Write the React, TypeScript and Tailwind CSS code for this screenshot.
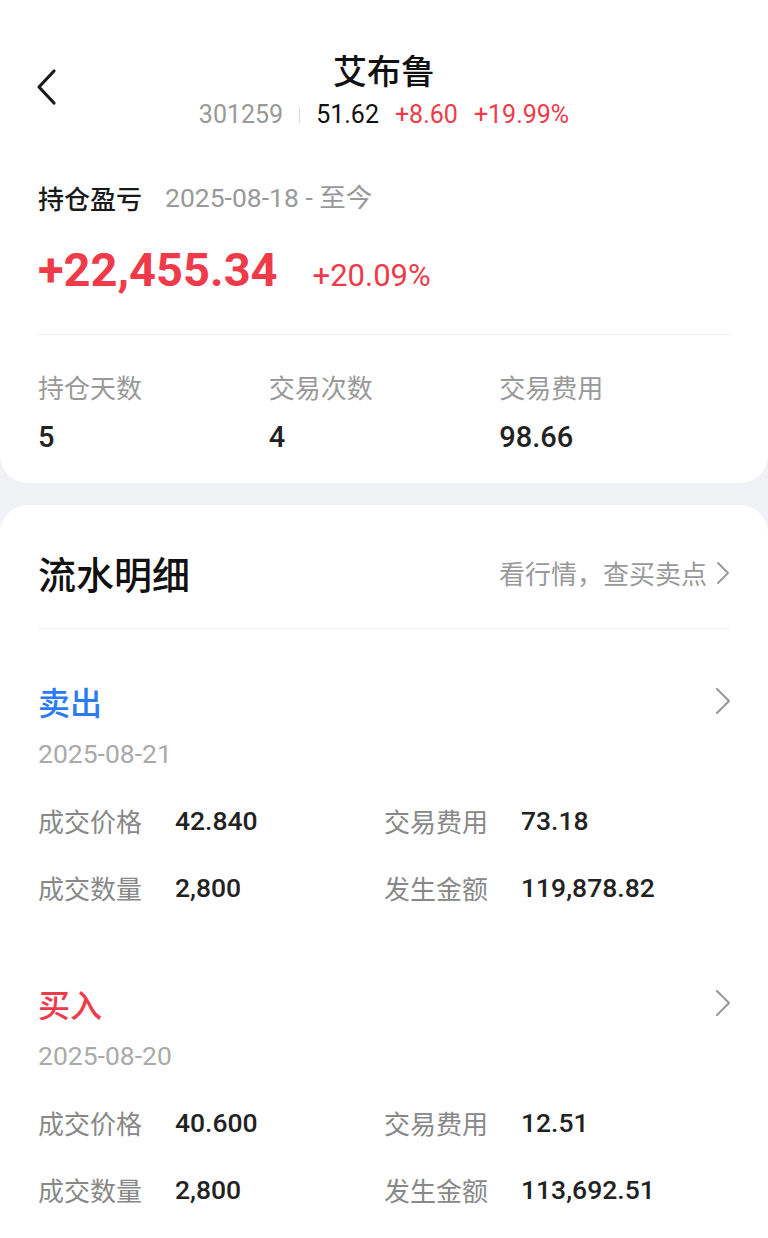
import React from "react";

const RED = "text-[#ef3a4a]";
const numFont = { fontFamily: "Roboto, 'Noto Sans CJK SC', sans-serif" };

const cjk = "font-['Noto_Sans_CJK_SC',sans-serif]";

const Chevron = ({ className = "" }: { className?: string }) => (
  <svg width="16" height="28" viewBox="0 0 16 28" className={className}>
    <path d="M2 2 L14 14 L2 26" fill="none" stroke="#9a9a9a" strokeWidth="2.2" strokeLinecap="round" strokeLinejoin="round" />
  </svg>
);

type Trade = {
  side: string;
  color: string;
  date: string;
  price: string;
  fee: string;
  qty: string;
  amount: string;
};

const trades: Trade[] = [
  { side: "卖出", color: "text-[#2b7cf3]", date: "2025-08-21", price: "42.840", fee: "73.18", qty: "2,800", amount: "119,878.82" },
  { side: "买入", color: "text-[#ef3a4a]", date: "2025-08-20", price: "40.600", fee: "12.51", qty: "2,800", amount: "113,692.51" },
];

const Field = ({ label, value }: { label: string; value: string }) => (
  <div className="flex items-center">
    <span className="w-[137px] text-[26px] leading-[30px] text-[#888]">{label}</span>
    <span className="text-[26.5px] leading-[30px] text-[#222] font-medium" style={numFont}>{value}</span>
  </div>
);

export default function App() {
  return (
    <div className={`min-h-[1238px] bg-[#f1f2f6] ${cjk}`}>
      {/* top card */}
      <div className="bg-white rounded-b-[28px] px-[38px] pt-[50px] pb-[30px]">
        <div className="relative">
          <svg width="24" height="40" viewBox="0 0 24 40" className="absolute left-[-2px] top-[18px]">
            <path d="M18 3 L3 19 L18 35" fill="none" stroke="#1a1a1a" strokeWidth="3.2" strokeLinecap="round" strokeLinejoin="round" />
          </svg>
          <div className="text-center text-[34px] leading-[40px] font-medium text-[#111]">艾布鲁</div>
          <div className="mt-[10px] flex items-center justify-center text-[25px] leading-[30px]" style={numFont}>
            <span className="text-[#999]">301259</span>
            <span className="mx-[16px] h-[16px] w-px bg-[#d8d8d8]" />
            <span className="text-[#111]">51.62</span>
            <span className={`ml-[16px] ${RED}`}>+8.60</span>
            <span className={`ml-[16px] ${RED}`}>+19.99%</span>
          </div>
        </div>

        <div className="mt-[53px] flex items-center leading-[30px]">
          <span className="text-[26px] font-medium text-[#1a1a1a]">持仓盈亏</span>
          <span className="ml-[23px] text-[26.5px] text-[#999]" style={numFont}>2025-08-18 - 至今</span>
        </div>

        <div className="mt-[31px] flex items-baseline">
          <span className={`text-[47px] leading-[52px] font-bold ${RED}`} style={numFont}>+22,455.34</span>
          <span className={`ml-[35px] text-[31px] leading-[34px] ${RED}`} style={numFont}>+20.09%</span>
        </div>

        <div className="mt-[38px] h-px bg-[#f0f0f0]" />

        <div className="mt-[37px] grid grid-cols-3">
          {[
            ["持仓天数", "5"],
            ["交易次数", "4"],
            ["交易费用", "98.66"],
          ].map(([l, v]) => (
            <div key={l}>
              <div className="text-[26px] leading-[30px] text-[#999]">{l}</div>
              <div className="mt-[19px] text-[29px] leading-[32px] font-medium text-[#222]" style={numFont}>{v}</div>
            </div>
          ))}
        </div>
      </div>

      {/* detail card */}
      <div className="mt-[22px] bg-white rounded-t-[28px] px-[38px] pt-[46px] pb-[34px] min-h-[733px]">
        <div className="flex items-center justify-between">
          <span className="text-[38px] leading-[44px] font-medium text-[#111]">流水明细</span>
          <span className="flex items-center text-[26px] leading-[30px] text-[#999]">
            看行情，查买卖点
            <svg width="14" height="24" viewBox="0 0 14 24" className="ml-[9px]">
              <path d="M2 2 L12 12 L2 22" fill="none" stroke="#9a9a9a" strokeWidth="2" strokeLinecap="round" strokeLinejoin="round" />
            </svg>
          </span>
        </div>
        <div className="mt-[33px] h-px bg-[#f0f0f0]" />

        {trades.map((t, i) => (
          <div key={t.date} className={i === 0 ? "mt-[52px]" : "mt-[80px]"}>
            <div className="flex items-center justify-between">
              <span className={`text-[32px] leading-[40px] font-medium ${t.color}`}>{t.side}</span>
              <Chevron className="mr-[-1px]" />
            </div>
            <div className="mt-[18px] text-[26.5px] leading-[30px] text-[#aaa]" style={numFont}>{t.date}</div>
            <div className="mt-[37px] grid grid-cols-2">
              <Field label="成交价格" value={t.price} />
              <Field label="交易费用" value={t.fee} />
            </div>
            <div className="mt-[37px] grid grid-cols-2">
              <Field label="成交数量" value={t.qty} />
              <Field label="发生金额" value={t.amount} />
            </div>
          </div>
        ))}
      </div>
    </div>
  );
}
